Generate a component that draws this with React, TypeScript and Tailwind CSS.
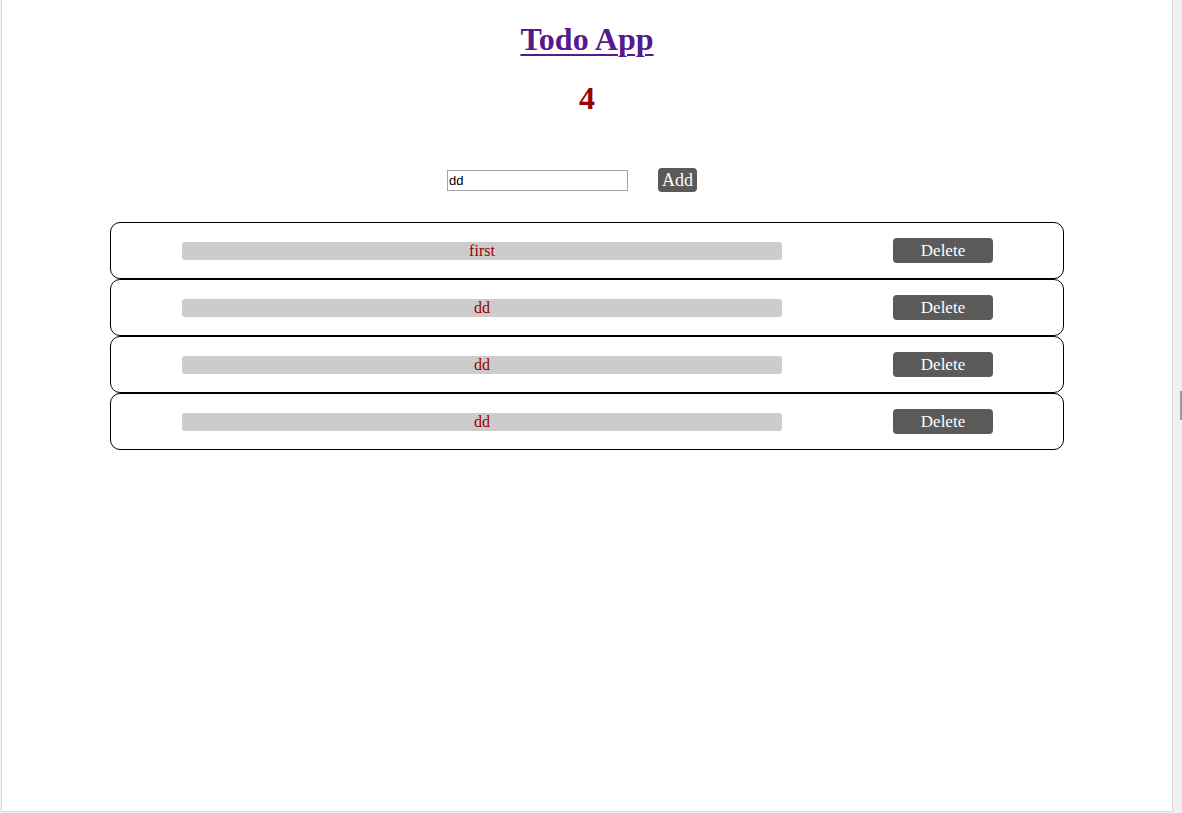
import React from "react";

const items = ["first", "dd", "dd", "dd"];

export default function App() {
  return (
    <div className="relative w-[1182px] h-[813px] bg-[#f0f0f0] overflow-hidden">
      <div className="absolute left-[1px] top-0 w-[1172px] h-[812px] bg-white border-l border-r border-b border-[#dcdcdc]">
        <div className="flex flex-col items-center" style={{ fontFamily: '"Liberation Serif", serif' }}>
          <h1 className="mt-[21px] text-[32px] leading-[37px] font-bold text-[#551a8b] underline decoration-[2px] underline-offset-[4px]">
            Todo App
          </h1>
          <h1 className="mt-[22px] text-[32px] leading-[37px] font-bold text-[#990000]">4</h1>
          <div className="mt-[51px] flex items-center w-full pl-[445px]">
            <input
              defaultValue="dd"
              className="w-[181px] h-[21px] border border-[#a5a5a5] px-[1px] text-[13px] text-black outline-none"
              style={{ fontFamily: '"Liberation Sans", Arial, sans-serif' }}
            />
            <button className="ml-[30px] h-[24px] px-[4px] rounded-[4px] bg-[#5a5a5a] text-white text-[18px] leading-[24px]">
              Add
            </button>
          </div>
          <div className="mt-[30px] w-[954px] flex flex-col">
            {items.map((t, i) => (
              <div
                key={i}
                className="h-[57px] border border-black rounded-[10px] flex items-center pl-[71px]"
              >
                <div className="w-[600px] h-[18px] bg-[#cccccc] rounded-[3px] flex items-center justify-center text-[#990000] text-[16px] leading-[18px]">
                  {t}
                </div>
                <button className="ml-[111px] w-[100px] h-[25px] bg-[#5a5a5a] rounded-[4px] text-white text-[17px] leading-[25px]">
                  Delete
                </button>
              </div>
            ))}
          </div>
        </div>
      </div>
      <div className="absolute left-[1180px] top-[391px] w-[2px] h-[29px] bg-[#9a9a9a]" />
    </div>
  );
}
